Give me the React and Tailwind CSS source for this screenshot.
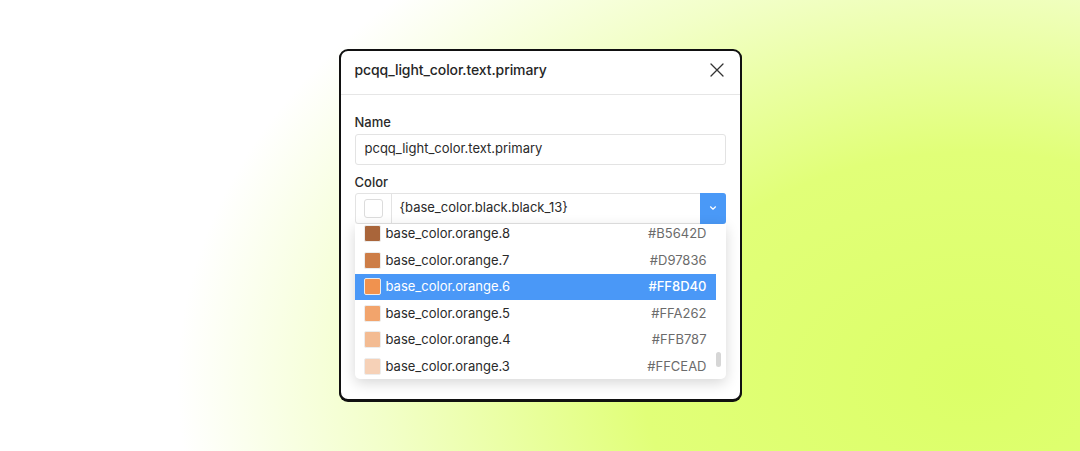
import React from "react";

const rows = [
  { name: "base_color.orange.8", hex: "#B5642D", sw: "#a9653a" },
  { name: "base_color.orange.7", hex: "#D97836", sw: "#cd7d47" },
  { name: "base_color.orange.6", hex: "#FF8D40", sw: "#f0924f", active: true },
  { name: "base_color.orange.5", hex: "#FFA262", sw: "#f2a46c" },
  { name: "base_color.orange.4", hex: "#FFB787", sw: "#f3bb92" },
  { name: "base_color.orange.3", hex: "#FFCEAD", sw: "#f6d1b7" },
];

export default function App() {
  return (
    <div
      className="w-[1080px] h-[451px] flex items-center justify-center bg-[radial-gradient(ellipse_80%_135%_at_90%_85%,#dcff68_0%,#e1ff78_38%,#f2ffc8_68%,#ffffff_92%)]"
      style={{ fontFamily: "Inter, 'Noto Sans', sans-serif" }}
    >
      <div className="w-[403px] h-[352px] -mt-[2px] bg-white border-2 border-[#111] rounded-[9px] shadow-[0_1px_0_#111] flex flex-col overflow-visible">
        <div className="h-[44px] shrink-0 flex items-center justify-between pl-[14px] pr-[14px] pb-[5px] border-b border-[#e6e6e6]">
          <span className="text-[14px] font-medium text-[#262626] tracking-[-0.1px]">
            pcqq_light_color.text.primary
          </span>
          <svg width="16" height="16" viewBox="0 0 16 16" className="mr-[1px]">
            <path d="M2 2 L14 14 M14 2 L2 14" stroke="#333" strokeWidth="1.3" strokeLinecap="round" />
          </svg>
        </div>
        <div className="flex flex-col px-[14px] pt-[19px]">
          <label className="text-[13px] font-medium text-[#2a2a2a] leading-[16px]">Name</label>
          <div className="mt-[4px] h-[31px] border border-[#e3e3e3] rounded-[3px] flex items-center px-[9px] text-[13px] text-[#2a2a2a]">
            pcqq_light_color.text.primary
          </div>
          <label className="mt-[9px] text-[13px] font-medium text-[#2a2a2a] leading-[16px]">Color</label>
          <div className="relative mt-[3px]">
            <div className="h-[31px] border border-[#e3e3e3] rounded-[3px] flex">
              <div className="w-[36px] border-r border-[#e3e3e3] flex items-center justify-center">
                <div className="w-[19px] h-[19px] border border-[#dcdcdc] rounded-[3px] bg-white" />
              </div>
              <div className="flex-1 flex items-center pl-[8px] text-[13px] text-[#2a2a2a]">
                {"{base_color.black.black_13}"}
              </div>
              <div className="w-[26px] -my-px -mr-px bg-[#4a99f7] rounded-r-[3px] flex items-center justify-center">
                <svg width="8" height="6" viewBox="0 0 8 6">
                  <path d="M1.5 1.8 L4 4.2 L6.5 1.8" stroke="#fff" strokeWidth="1.2" fill="none" strokeLinecap="round" strokeLinejoin="round" />
                </svg>
              </div>
            </div>
            <div className="absolute left-0 right-0 top-[31px] h-[155px] bg-white rounded-b-[5px] shadow-[0_4px_14px_rgba(0,0,0,0.16)] overflow-hidden z-10">
              <div className="-mt-[3px] pr-[10px]">
                {rows.map((r) => (
                  <div
                    key={r.name}
                    className={
                      "h-[26.5px] flex items-center pl-[9px] pr-[9px] text-[13px] " +
                      (r.active ? "bg-[#4a98f7] text-white" : "text-[#2a2a2a]")
                    }
                  >
                    <div
                      className="w-[17px] h-[17px] rounded-[2px] border border-[#ececec]"
                      style={{ backgroundColor: r.sw }}
                    />
                    <span className="ml-[5px] flex-1">{r.name}</span>
                    <span className={r.active ? "font-medium text-white" : "text-[#6b6b6b]"}>{r.hex}</span>
                  </div>
                ))}
              </div>
              <div className="absolute right-[5px] top-[128px] w-[5px] h-[15px] rounded-full bg-[#d6d6d6]" />
            </div>
          </div>
        </div>
      </div>
    </div>
  );
}
